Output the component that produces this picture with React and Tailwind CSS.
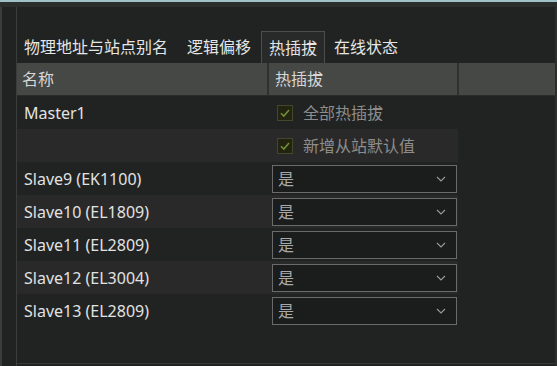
import React from "react";

const font = { fontFamily: '"Noto Sans", "Noto Sans CJK SC", sans-serif' };

function Check() {
  return (
    <div className="w-[16px] h-[16px] border border-[#45462e] bg-[#23240f] flex items-center justify-center">
      <svg width="12" height="12" viewBox="0 0 12 12">
        <path d="M2 6.2 L4.8 9 L10 3" fill="none" stroke="#6f8f3a" strokeWidth="1.6" />
      </svg>
    </div>
  );
}

function Select() {
  return (
    <div className="ml-[4px] w-[185px] h-[28px] border border-[#6a6a6a] bg-[#1b1d1c] flex items-center justify-between pl-[5px] pr-[10px]">
      <span className="text-[16px] text-[#a9a9a9] leading-none">是</span>
      <svg width="10" height="6" viewBox="0 0 10 6">
        <path d="M1 1 L5 5 L9 1" fill="none" stroke="#9a9a9a" strokeWidth="1.1" />
      </svg>
    </div>
  );
}

function Row({ name, alt, children }) {
  return (
    <div className="flex h-[33px]">
      <div className={`flex w-[441px] ${alt ? "bg-[#292929]" : ""}`}>
        <div className="w-[251px] flex items-center pl-[7px] text-[16px] text-[#e2e2e2]">{name}</div>
        <div className="flex-1 flex items-center">{children}</div>
      </div>
    </div>
  );
}

export default function App() {
  const slaves = [
    "Slave9 (EK1100)",
    "Slave10 (EL1809)",
    "Slave11 (EL2809)",
    "Slave12 (EL3004)",
    "Slave13 (EL2809)",
  ];
  return (
    <div className="w-[557px] h-[366px] bg-[#202321] overflow-hidden flex flex-col" style={font}>
      <div className="h-[2px] bg-[#9ec2c7]" />
      <div className="h-[5px] bg-[#2b2e2c]" />
      <div className="flex-1 flex">
        <div className="w-[2px] bg-[#3b3d3c]" />
        <div className="w-[14px]" />
        <div className="w-[1px] bg-[#3a3d3b]" />
        <div className="flex-1 flex flex-col">
          <div className="h-[24px]" />
          <div className="flex h-[32px] items-stretch text-[16px] text-[#e6e6e6]">
            <div className="px-[7px] flex items-center">物理地址与站点别名</div>
            <div className="ml-[5px] px-[7px] flex items-center">逻辑偏移</div>
            <div className="ml-[3px] px-[7px] flex items-center border border-b-0 border-[#4c4e4d] bg-[#282a29]">热插拔</div>
            <div className="ml-[2px] px-[7px] flex items-center">在线状态</div>
          </div>
          <div className="flex h-[33px] bg-[#464846] text-[16px] text-[#d6d6d6] border-b border-[#2a2c2b]">
            <div className="w-[250px] flex items-center pl-[5px]">名称</div>
            <div className="w-[2px] bg-[#2f3130]" />
            <div className="w-[188px] flex items-center pl-[6px]">热插拔</div>
            <div className="w-[2px] bg-[#2f3130]" />
            <div className="flex-1" />
          </div>
          <Row name="Master1">
            <div className="flex items-center ml-[9px] gap-[10px]">
              <Check />
              <span className="text-[16px] text-[#8d8d8d]">全部热插拔</span>
            </div>
          </Row>
          <Row name="" alt>
            <div className="flex items-center ml-[9px] gap-[10px]">
              <Check />
              <span className="text-[16px] text-[#8d8d8d]">新增从站默认值</span>
            </div>
          </Row>
          {slaves.map((s, i) => (
            <Row key={s} name={s} alt={i % 2 === 1}>
              <Select />
            </Row>
          ))}
          <div className="flex-1" />
          <div className="h-[1px] bg-[#343a38]" />
          <div className="h-[2px]" />
        </div>
        <div className="w-[2px] bg-[#2b2e2c]" />
      </div>
    </div>
  );
}
